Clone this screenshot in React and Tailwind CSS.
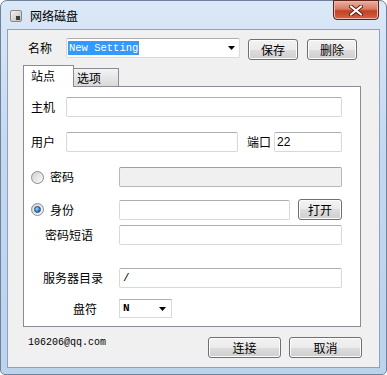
const btn =
  "flex items-center justify-center rounded-[3px] border border-[#707070] bg-[linear-gradient(#f2f2f2_0%,#ebebeb_50%,#dddddd_50%,#cfcfcf_100%)] shadow-[inset_0_0_0_1px_#fcfcfc] text-[12px] leading-none";
const input =
  "h-[20px] border border-[#d6d9de] border-t-[#abadb3] bg-white rounded-[2px]";

function Radio({ checked }) {
  return (
    <div className="w-[13px] h-[13px] rounded-full border border-[#8b8b8b] bg-[linear-gradient(135deg,#d0d0d0,#fbfbfb)] flex items-center justify-center">
      {checked && (
        <div className="w-[7px] h-[7px] rounded-full bg-[radial-gradient(circle_at_35%_35%,#9fd5ff,#1f6fc4_70%)] border border-[#1a4f8f]" />
      )}
    </div>
  );
}

function Arrow() {
  return (
    <svg width="7" height="4" viewBox="0 0 7 4">
      <path d="M0 0h7L3.5 4z" fill="#000" />
    </svg>
  );
}

export default function App() {
  return (
    <div className="w-[387px] h-[375px] bg-white text-black text-[12px] font-['Noto_Sans_CJK_SC','Noto_Sans',sans-serif]">
      <div className="w-[387px] h-[375px] rounded-t-[7px] rounded-b-[5px] border border-[#6f829b] bg-[linear-gradient(#dbe8f7,#c4d8f0_40%,#bcd3ee)] px-[6px] pb-[6px] flex flex-col">
        {/* title bar */}
        <div className="h-[28px] flex items-start justify-between">
          <div className="flex items-center h-[28px] pl-[3px] gap-[8px] pt-[1px]">
            <div className="w-[12px] h-[12px] rounded-[2px] border border-[#8a8a8a] bg-[linear-gradient(135deg,#f4f4f4,#b9b9b9)] flex items-end justify-end p-[1px]">
              <div className="w-[4px] h-[4px] bg-[#404040]" />
            </div>
            <span className="text-[12px] leading-none">网络磁盘</span>
          </div>
          <div className="-mt-[1px] mr-[1px] w-[46px] h-[20px] rounded-b-[4px] border border-[#5c2117] bg-[linear-gradient(#eab0a3,#d97a66_45%,#c2401f_55%,#d0654a)] shadow-[inset_0_0_0_1px_#f0b7a8] flex items-center justify-center">
            <svg width="14" height="11" viewBox="0 0 14 11">
              <path d="M2 1.5L12 9.5M12 1.5L2 9.5" stroke="#5a1f14" strokeWidth="4" strokeLinecap="round" />
              <path d="M2 1.5L12 9.5M12 1.5L2 9.5" stroke="#fff" strokeWidth="2.2" strokeLinecap="round" />
            </svg>
          </div>
        </div>

        {/* client area */}
        <div className="flex-1 border border-[#8da2bd] bg-[#f0f0f0] flex flex-col">
          <div className="mt-[8px] h-[22px] flex items-start">
            <div className="w-[58px] pl-[20px] h-[20px] flex items-center">名称</div>
            <div className={`${input} w-[174px] flex items-center justify-between pl-[1px] pr-[4px]`}>
              <span className="bg-[#3399ff] text-white font-['Liberation_Mono',monospace] text-[10.5px] leading-[14px] px-[1px]">
                New Setting
              </span>
              <Arrow />
            </div>
            <div className={`${btn} ml-[8px] mt-[1px] w-[50px] h-[21px]`}>保存</div>
            <div className={`${btn} ml-[9px] mt-[1px] w-[50px] h-[21px]`}>删除</div>
          </div>

          {/* tabs */}
          <div className="mt-[5px] ml-[15px] relative z-10 -mb-[1px] h-[22px] flex items-end">
            <div className="w-[51px] h-[22px] border border-b-0 border-[#898c95] bg-white pl-[7px] pt-[2px] leading-[16px]">
              站点
            </div>
            <div className="w-[45px] h-[18px] mb-[1px] border border-l-0 border-b-0 border-[#898c95] bg-[linear-gradient(#f3f3f3,#e5e5e5_55%,#d9d9d9)] pl-[3px] leading-[17px]">
              选项
            </div>
          </div>

          <div className="ml-[15px] w-[338px] h-[241px] border border-[#898c95] bg-white flex flex-col">
            <div className="mt-[10px] h-[20px] flex items-center">
              <div className="w-[42px] pl-[7px]">主机</div>
              <div className={`${input} w-[276px]`} />
            </div>
            <div className="mt-[15px] h-[20px] flex items-center">
              <div className="w-[42px] pl-[7px]">用户</div>
              <div className={`${input} w-[172px]`} />
              <div className="ml-[9px] w-[24px]">端口</div>
              <div className={`${input} ml-[3px] w-[68px] flex items-center pl-[2px] font-['Liberation_Sans',sans-serif]`}>
                22
              </div>
            </div>
            <div className="mt-[15px] h-[20px] flex items-center">
              <div className="w-[95px] pl-[7px] flex items-center">
                <Radio />
                <span className="ml-[6px]">密码</span>
              </div>
              <div className="w-[223px] h-[20px] rounded-[2px] border border-[#b8b8b8] border-t-[#a0a0a0] bg-[#f0f0f0]" />
            </div>
            <div className="mt-[12px] h-[21px] flex items-center">
              <div className="w-[95px] pl-[7px] flex items-center">
                <Radio checked />
                <span className="ml-[6px]">身份</span>
              </div>
              <div className={`${input} w-[171px]`} />
              <div className={`${btn} ml-[8px] w-[44px] h-[21px]`}>打开</div>
            </div>
            <div className="mt-[5px] h-[20px] flex items-center">
              <div className="w-[95px] pl-[21px]">密码短语</div>
              <div className={`${input} w-[223px]`} />
            </div>
            <div className="mt-[23px] h-[20px] flex items-center">
              <div className="w-[95px] pl-[19px]">服务器目录</div>
              <div className={`${input} w-[223px] flex items-center pl-[3px] font-['Liberation_Mono',monospace] text-[11px]`}>
                /
              </div>
            </div>
            <div className="mt-[11px] h-[19px] flex items-center">
              <div className="w-[95px] pl-[49px]">盘符</div>
              <div className="w-[53px] h-[19px] border border-[#d6d9de] border-t-[#abadb3] bg-white flex items-center justify-between pl-[3px] pr-[5px]">
                <span className="font-['Liberation_Mono',monospace] font-bold text-[11px] leading-none">N</span>
                <Arrow />
              </div>
            </div>
          </div>

          {/* footer */}
          <div className="mt-[10px] flex items-start">
            <div className="w-[200px] pl-[20px] font-['Liberation_Mono',monospace] text-[10px] leading-[10px] pt-[1px]">
              106206@qq.com
            </div>
            <div className={`${btn} w-[73px] h-[21px]`}>连接</div>
            <div className={`${btn} ml-[8px] w-[73px] h-[21px]`}>取消</div>
          </div>
        </div>
      </div>
    </div>
  );
}
